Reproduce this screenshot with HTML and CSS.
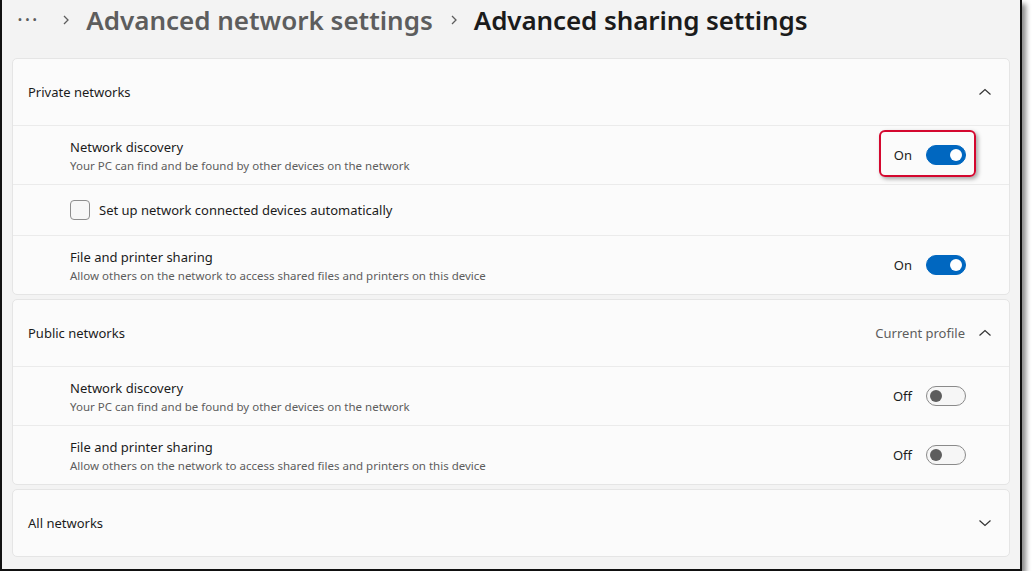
FILE: index.html
```html
<!DOCTYPE html>
<html lang="en">
<head>
  <meta charset="UTF-8">
  <title>Advanced sharing settings</title>
  <link rel="stylesheet" href="styles.css">
</head>
<body>
  <div class="window">
    <div class="breadcrumb">
      <span class="dots">&middot;&middot;&middot;</span>
      <svg class="crumb-sep" width="10" height="12" viewBox="0 0 10 12"><path d="M3 2 L7 6 L3 10" fill="none" stroke="#5d5d5d" stroke-width="1.3"/></svg>
      <span class="crumb">Advanced network settings</span>
      <svg class="crumb-sep" width="10" height="12" viewBox="0 0 10 12"><path d="M3 2 L7 6 L3 10" fill="none" stroke="#5d5d5d" stroke-width="1.3"/></svg>
      <span class="crumb current">Advanced sharing settings</span>
    </div>

    <div class="card">
      <div class="card-header">
        <span>Private networks</span>
        <div class="header-right">
          <svg class="chevron" width="14" height="8" viewBox="0 0 14 8"><path d="M1.5 6.5 L7 1.5 L12.5 6.5" fill="none" stroke="#333" stroke-width="1.2"/></svg>
        </div>
      </div>
      <div class="row">
        <div class="row-text">
          <div class="row-title">Network discovery</div>
          <div class="row-desc">Your PC can find and be found by other devices on the network</div>
        </div>
        <div class="control highlight">
          <span class="state">On</span>
          <span class="toggle on"></span>
        </div>
      </div>
      <div class="row short">
        <label class="check"><span class="box"></span>Set up network connected devices automatically</label>
      </div>
      <div class="row">
        <div class="row-text">
          <div class="row-title">File and printer sharing</div>
          <div class="row-desc">Allow others on the network to access shared files and printers on this device</div>
        </div>
        <div class="control">
          <span class="state">On</span>
          <span class="toggle on"></span>
        </div>
      </div>
    </div>

    <div class="card">
      <div class="card-header">
        <span>Public networks</span>
        <div class="header-right">
          <span class="profile">Current profile</span>
          <svg class="chevron" width="14" height="8" viewBox="0 0 14 8"><path d="M1.5 6.5 L7 1.5 L12.5 6.5" fill="none" stroke="#333" stroke-width="1.2"/></svg>
        </div>
      </div>
      <div class="row">
        <div class="row-text">
          <div class="row-title">Network discovery</div>
          <div class="row-desc">Your PC can find and be found by other devices on the network</div>
        </div>
        <div class="control">
          <span class="state">Off</span>
          <span class="toggle"></span>
        </div>
      </div>
      <div class="row">
        <div class="row-text">
          <div class="row-title">File and printer sharing</div>
          <div class="row-desc">Allow others on the network to access shared files and printers on this device</div>
        </div>
        <div class="control">
          <span class="state">Off</span>
          <span class="toggle"></span>
        </div>
      </div>
    </div>

    <div class="card">
      <div class="card-header">
        <span>All networks</span>
        <div class="header-right">
          <svg class="chevron" width="14" height="8" viewBox="0 0 14 8"><path d="M1.5 1.5 L7 6.5 L12.5 1.5" fill="none" stroke="#333" stroke-width="1.2"/></svg>
        </div>
      </div>
    </div>
  </div>
</body>
</html>
```

FILE: styles.css
```css
body {
  margin: 0;
  background-color: #fff;
  font-family: 'Segoe UI', 'Noto Sans', sans-serif;
  color: #1b1b1b;
}
.window {
  width: 998px;
  height: 556px;
  padding: 0 10px 13px 10px;
  background-color: #f3f3f3;
  border: 2px solid #111;
  border-top: none;
  box-shadow: 4px 4px 5px rgba(0,0,0,0.45);
}
.breadcrumb {
  height: 40px;
  margin-bottom: 18px;
  display: flex;
  align-items: center;
  padding-left: 5px;
}
.dots {
  font-size: 22px;
  color: #5d5d5d;
  letter-spacing: 1.5px;
  margin-right: 22px;
  margin-top: -4px;
}
.crumb-sep {
  margin-right: 15px;
}
.crumb {
  font-size: 26px;
  font-weight: 600;
  color: #5d5d5d;
  margin-right: 16px;
}
.crumb.current {
  color: #1b1b1b;
  letter-spacing: -0.1px;
}
.card {
  background-color: #fbfbfb;
  border: 1px solid #e5e5e5;
  border-radius: 5px;
  margin-bottom: 4px;
}
.card-header {
  height: 66px;
  display: flex;
  align-items: center;
  justify-content: space-between;
  padding: 0 17px 0 15px;
  font-size: 13px;
}
.header-right {
  display: flex;
  align-items: center;
}
.profile {
  color: #5d5d5d;
  margin-right: 13px;
}
.chevron {
  display: block;
}
.row {
  height: 58px;
  border-top: 1px solid #ebebeb;
  display: flex;
  align-items: center;
  justify-content: space-between;
  padding: 0 43px 0 57px;
}
.row.short {
  height: 50px;
}
.row-title {
  font-size: 13px;
  line-height: 19px;
  margin-top: 1px;
}
.row-desc {
  font-size: 11.5px;
  line-height: 17px;
  color: #5d5d5d;
}
.control {
  position: relative;
  display: flex;
  align-items: center;
  font-size: 13px;
}
.state {
  margin-right: 14px;
}
.toggle {
  position: relative;
  width: 38px;
  height: 18px;
  border: 1px solid #8a8a8a;
  border-radius: 11px;
  background-color: #f6f6f6;
}
.toggle:before {
  content: "";
  position: absolute;
  width: 12px;
  height: 12px;
  border-radius: 50%;
  background-color: #5d5d5d;
  left: 3px;
  top: 3px;
}
.toggle.on {
  background-color: #0067c0;
  border-color: #0067c0;
}
.toggle.on:before {
  background-color: #fff;
  left: auto;
  right: 3px;
}
.highlight:after {
  content: "";
  position: absolute;
  left: -15px;
  right: -10px;
  top: -15px;
  bottom: -12px;
  border: 2px solid #d4082f;
  border-radius: 6px;
  box-shadow: 2px 2px 4px rgba(0,0,0,0.35);
}
.check {
  display: flex;
  align-items: center;
  font-size: 13px;
  margin-top: -1px;
}
.box {
  width: 18px;
  height: 18px;
  border: 1px solid #8d8d8d;
  border-radius: 4px;
  background-color: #f7f7f7;
  margin-right: 9px;
}
```
